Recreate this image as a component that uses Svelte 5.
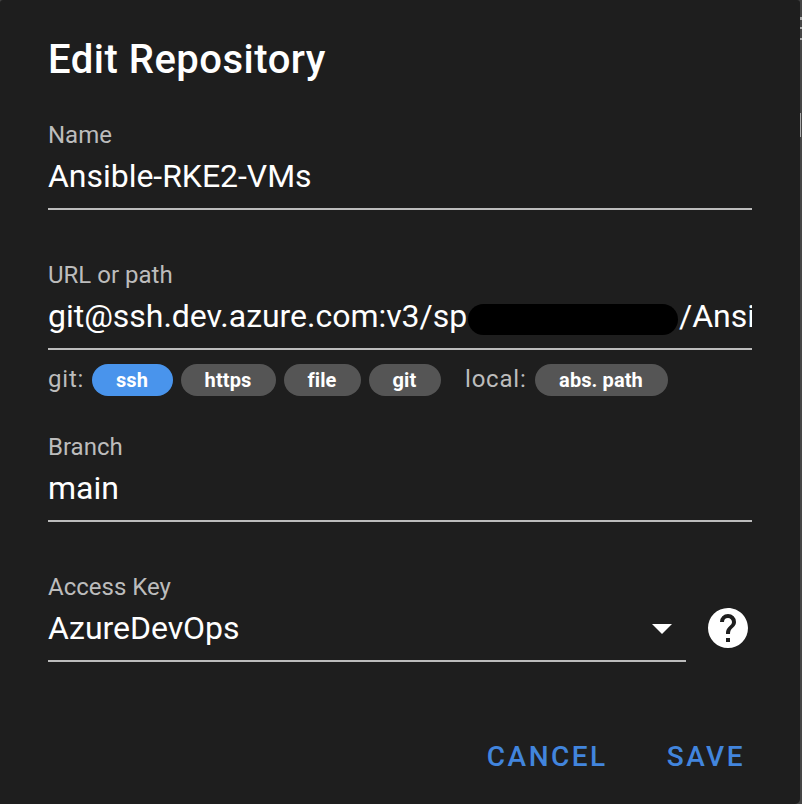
<script>
  const gitKinds = ['ssh', 'https', 'file', 'git'];
  let selected = $state('ssh');
</script>

<div class="page">
  <div class="dialog">
    <h1>Edit Repository</h1>

    <div class="field">
      <div class="label">Name</div>
      <div class="value">Ansible-RKE2-VMs</div>
    </div>

    <div class="field">
      <div class="label">URL or path</div>
      <div class="value url">
        <span class="host">git@ssh.dev.azure.com:v3/sp</span><span class="redacted"></span><span>/Ansi</span>
      </div>
    </div>

    <div class="kinds">
      <span class="caption git">git:</span>
      {#each gitKinds as kind}
        <button class="chip {kind}" class:active={selected === kind} onclick={() => (selected = kind)}>{kind}</button>
      {/each}
      <span class="caption local">local:</span>
      <button class="chip abs" class:active={selected === 'abs'} onclick={() => (selected = 'abs')}>abs. path</button>
    </div>

    <div class="field branch">
      <div class="label">Branch</div>
      <div class="value">main</div>
    </div>

    <div class="keyrow">
      <div class="field key">
        <div class="label">Access Key</div>
        <div class="value select">
          <span>AzureDevOps</span>
          <svg viewBox="0 0 24 24"><path d="M7,10L12,15L17,10H7Z" /></svg>
        </div>
      </div>
      <svg class="help" viewBox="0 0 24 24"><path d="M15.07,11.25L14.17,12.17C13.45,12.89 13,13.5 13,15H11V14.5C11,13.39 11.45,12.39 12.17,11.67L13.41,10.41C13.78,10.05 14,9.55 14,9C14,7.89 13.1,7 12,7A2,2 0 0,0 10,9H8A4,4 0 0,1 12,5A4,4 0 0,1 16,9C16,9.88 15.64,10.67 15.07,11.25M13,19H11V17H13M12,2A10,10 0 0,0 2,12A10,10 0 0,0 12,22A10,10 0 0,0 22,12C22,6.47 17.5,2 12,2Z" /></svg>
    </div>

    <div class="actions">
      <button>CANCEL</button>
      <button>SAVE</button>
    </div>
  </div>
  <div class="edge">
    <i class="m1"></i><i class="m2"></i><i class="m3"></i><i class="m4"></i>
  </div>
</div>

<style>
  :global(body) {
    background: #454545;
    overflow: hidden;
  }
  .page {
    display: flex;
    width: 802px;
    height: 804px;
    font-family: Roboto, 'Liberation Sans', sans-serif;
    color: #fff;
  }
  .dialog {
    box-sizing: border-box;
    width: 800px;
    height: 804px;
    padding: 28px 48px 0;
    background: #1e1e1e;
    border-radius: 3px 3px 5px 0;
  }
  .edge {
    width: 2px;
    display: flex;
    flex-direction: column;
    background: #454545;
  }
  .edge i {
    width: 2px;
    height: 2px;
    background: #aaa;
  }
  .edge .m1 {
    margin-top: 17px;
    height: 3px;
  }
  .m2 { margin-top: 7px; }
  .m3 { margin-top: 9px; }
  .edge .m4 {
    margin-top: 73px;
    width: 1px;
    height: 24px;
  }
  h1 {
    margin: 0 0 31px;
    font-size: 40px;
    line-height: 64px;
    font-weight: 500;
    letter-spacing: 0.5px;
  }
  .field {
    box-sizing: border-box;
    height: 87px;
    margin-bottom: 53px;
    border-bottom: 2px solid #bcbcbc;
  }
  .label {
    font-size: 24px;
    line-height: 24px;
    color: #bcbcbc;
  }
  .value {
    font-size: 32px;
    line-height: 58px;
    letter-spacing: -0.03px;
    white-space: nowrap;
  }
  .url {
    display: flex;
    align-items: center;
    overflow: hidden;
  }
  .redacted {
    flex: none;
    width: 210px;
    height: 31px;
    margin: 6px 1px 0 0;
    border-radius: 16px;
    background: #000;
  }
  .host {
    flex: none;
    width: 420px;
  }
  .kinds {
    display: flex;
    align-items: center;
    height: 32px;
    margin: -39px 0 39px;
  }
  .caption {
    flex: none;
    height: 32px;
    font-size: 24px;
    line-height: 30px;
    letter-spacing: 0.8px;
    color: #bcbcbc;
  }
  .git.caption { width: 44px; }
  .local.caption {
    width: 70px;
    margin-left: 16px;
  }
  button {
    border: 0;
    padding: 0;
    font-family: inherit;
    cursor: pointer;
  }
  .chip {
    box-sizing: border-box;
    height: 32px;
    margin-right: 8px;
    padding-right: 1px;
    border-radius: 16px;
    background: #555;
    color: #fff;
    font-size: 20px;
    line-height: 32px;
    font-weight: 700;
    letter-spacing: 0.1px;
  }
  .chip.active { background: #4994ec; }
  .ssh { width: 81px; }
  .https { width: 95px; }
  .file { width: 77px; }
  .chip.git { width: 72px; }
  .abs { width: 133px; }
  .keyrow {
    display: flex;
    justify-content: space-between;
    height: 87px;
  }
  .key { width: 638px; }
  .select {
    display: flex;
    align-items: center;
    justify-content: space-between;
  }
  svg {
    width: 48px;
    height: 48px;
    fill: #fff;
  }
  .help { margin-top: 29px; }
  .actions {
    display: flex;
    justify-content: flex-end;
    gap: 59px;
    margin-top: 67px;
    padding-right: 7px;
  }
  .actions button {
    height: 56px;
    background: none;
    color: #4285dd;
    font-size: 28px;
    line-height: 56px;
    font-weight: 500;
    letter-spacing: 2.5px;
  }
</style>
